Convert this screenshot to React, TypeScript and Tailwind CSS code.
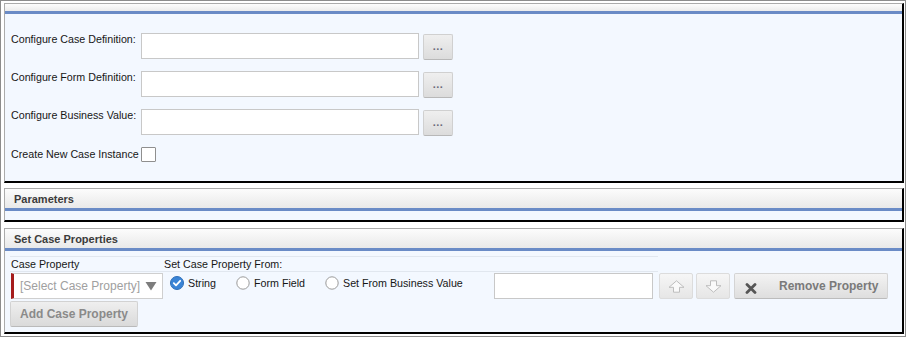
import React from "react";

function DotsButton() {
  return (
    <button className="ml-[4px] mt-[1px] flex h-[26px] w-[30px] items-center justify-center rounded-[2px] border border-[#d0d0d0] border-b-[#b8b8b8] bg-gradient-to-b from-[#efefef] to-[#dcdcdc] pb-[1px] text-[11px] font-bold leading-none tracking-[0.5px] text-[#6a6a7a]">
      ...
    </button>
  );
}

function FieldRow({ label }: { label: string }) {
  return (
    <div className="flex items-start">
      <div className="w-[130px] whitespace-nowrap leading-[13px]">{label}</div>
      <div className="h-[26px] w-[278px] border border-[#c8c8c8] bg-white" />
      <DotsButton />
    </div>
  );
}

function PanelHeader({ title, tall = true }: { title?: string; tall?: boolean }) {
  return (
    <>
      <div
        className={
          tall
            ? "flex h-[19px] items-center bg-gradient-to-b from-[#fcfcfc] to-[#e9e9e9] pl-[9px] pt-[1px] text-[11px] font-bold text-[#3b3b3b]"
            : "h-[7px] bg-gradient-to-b from-[#fcfcfc] to-[#ececec]"
        }
      >
        {title}
      </div>
      <div className="h-[3px] bg-[#6a8bc6]" />
    </>
  );
}

function Radio({ checked }: { checked?: boolean }) {
  if (checked) {
    return (
      <svg width="14" height="14" viewBox="0 0 14 14" className="shrink-0">
        <circle cx="7" cy="7" r="6.5" fill="#3a84d6" stroke="#2f6fb8" strokeWidth="1" />
        <path d="M3.8 7.2 L6 9.3 L10.2 4.8" fill="none" stroke="#fff" strokeWidth="1.8" strokeLinecap="round" strokeLinejoin="round" />
      </svg>
    );
  }
  return (
    <svg width="14" height="14" viewBox="0 0 14 14" className="shrink-0">
      <circle cx="7" cy="7" r="6.2" fill="#fff" stroke="#9a9a9a" strokeWidth="1" />
    </svg>
  );
}

function ArrowButton({ up }: { up?: boolean }) {
  return (
    <button className="flex h-[26px] w-[34px] items-center justify-center rounded-[2px] border border-[#dcdcdc] bg-gradient-to-b from-[#f6f6f6] to-[#e6e6e6]">
      <svg width="17" height="13" viewBox="0 0 17 13">
        {up ? (
          <path d="M8.5 0.8 L16 7.3 H11.5 V12.2 H5.5 V7.3 H1 Z" fill="#fafafa" stroke="#bdbdbd" strokeWidth="1" strokeLinejoin="round" />
        ) : (
          <path d="M8.5 12.2 L16 5.7 H11.5 V0.8 H5.5 V5.7 H1 Z" fill="#fafafa" stroke="#bdbdbd" strokeWidth="1" strokeLinejoin="round" />
        )}
      </svg>
    </button>
  );
}

export default function App() {
  return (
    <div className="h-[337px] w-[906px] border border-[#8c8c8c] bg-white pb-[2px] pl-[3px] pr-[1px] pt-[2px] font-['Liberation_Sans',Arial,sans-serif] text-[10.7px] text-[#161616]">
      {/* Panel 1 */}
      <div className="w-[900px] border-b-2 border-l border-r-2 border-t border-b-black border-l-[#ababab] border-r-black border-t-[#ababab]">
        <PanelHeader tall={false} />
        <div className="flex h-[167px] flex-col gap-[11px] bg-[#f3f8ff] pl-[6px] pt-[19px]">
          <FieldRow label="Configure Case Definition:" />
          <FieldRow label="Configure Form Definition:" />
          <FieldRow label="Configure Business Value:" />
          <div className="flex items-center">
            <div className="w-[130px] whitespace-nowrap leading-[13px]">Create New Case Instance</div>
            <div className="h-[15px] w-[15px] rounded-[1px] border border-[#8f8f8f] bg-white" />
          </div>
        </div>
      </div>

      {/* Panel 2 */}
      <div className="mt-[5px] w-[900px] border-b-2 border-l border-r-2 border-t border-b-black border-l-[#ababab] border-r-black border-t-[#ababab]">
        <PanelHeader title="Parameters" />
        <div className="h-[9px] bg-[#f3f8ff]" />
      </div>

      {/* Panel 3 */}
      <div className="mt-[6px] w-[900px] border-b-2 border-l border-r-2 border-t border-b-black border-l-[#ababab] border-r-black border-t-[#ababab]">
        <PanelHeader title="Set Case Properties" />
        <div className="h-[81px] bg-[#f3f8ff] pl-[5px] pt-[5px]">
          <div className="flex h-[16px] w-[648px] items-center border-b border-t border-[#e1e7ef] leading-[13px]">
            <div className="w-[154px] pl-[1px]">Case Property</div>
            <div>Set Case Property From:</div>
          </div>
          <div className="flex items-start pt-[1px]">
            <div className="ml-[1px] flex h-[26px] w-[152px] items-center justify-between border border-l-[3px] border-[#cfcfcf] border-l-[#a51c1c] bg-white pl-[6px] pr-[5px] text-[12px] text-[#a0a0a0]">
              <span className="whitespace-nowrap">[Select Case Property]</span>
              <svg width="12" height="10" viewBox="0 0 12 10">
                <path d="M0.5 1 H11.5 L6 9.5 Z" fill="#7d7d7d" />
              </svg>
            </div>
            <div className="ml-[7px] mt-[2px] flex items-center">
              <div className="flex w-[66px] items-center">
                <Radio checked />
                <span className="ml-[4px]">String</span>
              </div>
              <div className="flex w-[89px] items-center">
                <Radio />
                <span className="ml-[4px]">Form Field</span>
              </div>
              <div className="flex w-[169px] items-center">
                <Radio />
                <span className="ml-[4px] whitespace-nowrap">Set From Business Value</span>
              </div>
            </div>
            <div className="h-[26px] w-[159px] border border-[#c8c8c8] bg-white" />
            <div className="ml-[6px] flex gap-[3px]">
              <ArrowButton up />
              <ArrowButton />
              <button className="ml-[1px] flex h-[26px] w-[154px] items-center rounded-[2px] border border-[#d4d4d4] border-b-[#bcbcbc] bg-gradient-to-b from-[#f3f3f3] to-[#dedede] text-[12px] font-bold text-[#7a7a7a]">
                <svg width="12" height="11" viewBox="0 0 12 11" className="ml-[10px] mt-[5px]">
                  <path d="M2 1.5 L10 9.5 M10 1.5 L2 9.5" stroke="#555" strokeWidth="2.8" strokeLinecap="round" />
                </svg>
                <span className="ml-[22px] whitespace-nowrap">Remove Property</span>
              </button>
            </div>
          </div>
          <button className="mt-[2px] flex h-[26px] w-[128px] items-center justify-center rounded-[2px] border border-[#d2d2d2] border-b-[#bababa] bg-gradient-to-b from-[#efefef] to-[#dadada] text-[12px] font-bold text-[#8a8a8a]">
            Add Case Property
          </button>
        </div>
      </div>
    </div>
  );
}
